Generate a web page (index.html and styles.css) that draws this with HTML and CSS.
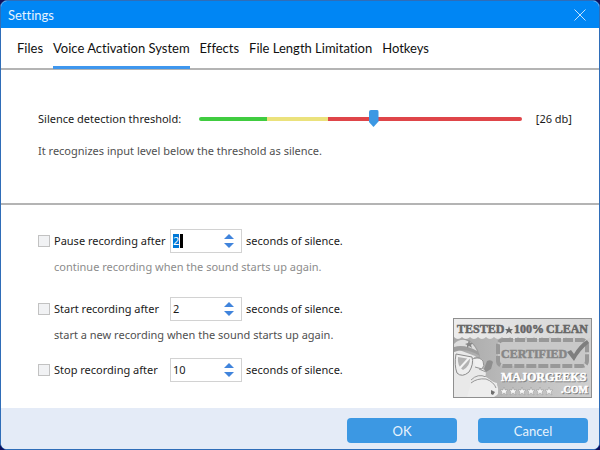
FILE: index.html
```html
<!DOCTYPE html>
<html lang="en">
  <head>
    <meta charset="UTF-8" />
    <meta name="viewport" content="width=device-width, initial-scale=1.0" />
    <title>Settings</title>
    <link rel="stylesheet" href="styles.css">
  </head>
  <body>
    <div class="window">
      <header class="titlebar">
        <h1 class="title">Settings</h1>
        <button class="close" type="button" aria-label="Close">
          <svg width="12" height="12" viewBox="0 0 12 12">
            <path d="M0.5 0.5 L11.5 11.5 M11.5 0.5 L0.5 11.5" />
          </svg>
        </button>
      </header>

      <nav class="tabs">
        <a class="tab" href="#files">Files</a>
        <a class="tab active" href="#voice">Voice Activation System</a>
        <a class="tab" href="#effects">Effects</a>
        <a class="tab" href="#length">File Length Limitation</a>
        <a class="tab" href="#hotkeys">Hotkeys</a>
      </nav>

      <section class="threshold">
        <div class="threshold-row">
          <label for="threshold">Silence detection threshold:</label>
          <input class="slider" type="range" id="threshold" min="0" max="48" value="26" />
          <output id="level" for="threshold">[26 db]</output>
        </div>
        <p class="note">It recognizes input level below the threshold as silence.</p>
      </section>

      <main class="options">
        <div class="option">
          <div class="option-row">
            <input class="check" type="checkbox" id="pause" />
            <label for="pause">Pause recording after</label>
            <span class="spin">
              <input class="number" type="number" id="pause-sec" value="2" aria-label="Pause seconds" />
              <span class="cursor"></span>
              <span class="arrows">
                <button class="up" type="button" aria-label="More"></button>
                <button class="down" type="button" aria-label="Less"></button>
              </span>
            </span>
            <span>seconds of silence.</span>
          </div>
          <p class="note indent muted">continue recording when the sound starts up again.</p>
        </div>

        <div class="option">
          <div class="option-row">
            <input class="check" type="checkbox" id="start" />
            <label for="start">Start recording after</label>
            <span class="spin">
              <input class="number" type="number" id="start-sec" value="2" aria-label="Start seconds" />
              <span class="arrows">
                <button class="up" type="button" aria-label="More"></button>
                <button class="down" type="button" aria-label="Less"></button>
              </span>
            </span>
            <span>seconds of silence.</span>
          </div>
          <p class="note indent">start a new recording when the sound starts up again.</p>
        </div>

        <div class="option last">
          <div class="option-row">
            <input class="check" type="checkbox" id="stop" />
            <label for="stop">Stop recording after</label>
            <span class="spin">
              <input class="number" type="number" id="stop-sec" value="10" aria-label="Stop seconds" />
              <span class="arrows">
                <button class="up" type="button" aria-label="More"></button>
                <button class="down" type="button" aria-label="Less"></button>
              </span>
            </span>
            <span>seconds of silence.</span>
          </div>
        </div>

        <svg class="badge" width="139" height="80" viewBox="0 0 139 80">
          <defs>
            <linearGradient id="top" x1="0" x2="1">
              <stop offset="0" stop-color="#ececec" />
              <stop offset="1" stop-color="#d4d4d4" />
            </linearGradient>
            <linearGradient id="back" x1="0" x2="1">
              <stop offset="0" stop-color="#a8a8a8" />
              <stop offset="0.45" stop-color="#bdbdbd" />
              <stop offset="1" stop-color="#d0d0d0" />
            </linearGradient>
          </defs>
          <rect x="0.5" y="0.5" width="138" height="79" fill="url(#top)" />
          <path fill="url(#back)" d="M1 19 q4 4 8 0 q4 4 8 0 q4 4 8 0 q4 4 8 0 q4 4 8 0 q4 4 8 0 q4 4 8 0 q4 4 8 0 q4 4 8 0 q4 4 8 0 q4 4 8 0 q4 4 8 0 q4 4 8 0 q4 4 8 0 q4 4 8 0 q4 4 8 0 q4 4 9 0 V79 H1 Z" />

          <!-- head -->
          <path fill="#e9e9e9" d="M1 30 L22 38 L28 44 L30 51 L33 54 L32 62 L44 65 L45 76 L40 79 H1 Z" />
          <path fill="#9d9d9d" d="M1 27 Q6 20 13 21 Q23 24 27 38 Q13 29 1 34 Z" />
          <path fill="#dedede" d="M1 26 Q6 21 12 22 Q20 24 24 33 Q12 26 1 29 Z" />
          <path fill="#888" d="M16 22 l1 3 3 0 -2 2 1 3 -3 -2 -2 2 0 -3 -2 -1 3 -1 Z" />
          <path fill="#eee" stroke="#8b8b8b" d="M3 36 L19 39 Q21 46 16 54 Q9 60 4 55 Q1 47 3 36 Z" />
          <path fill="#b2b2b2" d="M5 39 L17 41 Q17 48 10 52 Q4 48 5 39 Z" />
          <path fill="none" stroke="#f3f3f3" stroke-width="2" d="M7 50 L16 40" />
          <path fill="#f0f0f0" stroke="#929292" d="M21 40 Q27 39 30 43 Q32 48 29 51 L22 49" />
          <path fill="none" stroke="#9a9a9a" d="M19 41 L27 39 M26 51 L33 54 M18 62 Q25 55 33 59" />
          <path fill="#8e8e8e" d="M31 51 L34 43 Q38 41 40 44 L38 51 L33 54 Z" />
          <path fill="#ededed" d="M18 65 Q24 58 33 59 L42 65 Q47 70 44 77 L41 79 H14 Z" />
          <path fill="none" stroke="#959595" d="M18 65 Q24 60 33 61 Q41 64 43 70" />
          <path fill="#707070" d="M38 72 l4 2 -2 3 -2 -1 Z" />

          <!-- certified stamp -->
          <rect x="45" y="22" width="89" height="26" rx="5" fill="#c8c8c8" stroke="#989898" stroke-width="4" stroke-dasharray="10 2" />
          <text class="stamp certified" x="48" y="40">CERTIFIED</text>
          <path fill="#7e7e7e" d="M114 34 L118 32 L121 36 Q126 27 134 22 L136 25 Q127 32 121 43 Z" />

          <text class="stamp dark" x="4" y="15">TESTED</text>
          <path fill="#6a6a6a" d="M56 8 l1 3 3 0 -2 2 1 3 -3 -2 -3 2 1 -3 -2 -2 3 0 Z" />
          <text class="stamp dark" x="61" y="15">100%</text>
          <text class="stamp dark" x="93" y="15">CLEAN</text>

          <text class="stamp shade" x="49" y="64">MAJORGEEKS</text>
          <text class="stamp light" x="48" y="63">MAJORGEEKS</text>
          <g fill="#f6f6f6" stroke="#8c8c8c" stroke-width="0.4">
            <path id="star" d="M51 69 l1 3 3 0 -2 2 1 3 -3 -2 -3 2 1 -3 -2 -2 3 0 Z" />
            <use href="#star" x="9" />
            <use href="#star" x="18" />
            <use href="#star" x="27" />
            <use href="#star" x="36" />
            <use href="#star" x="45" />
          </g>
          <text class="stamp shade small" x="109" y="76">.COM</text>
          <text class="stamp light small" x="108" y="75">.COM</text>
          <rect x="0.5" y="0.5" width="138" height="79" fill="none" stroke="#8f8f8f" />
        </svg>
      </main>

      <footer class="footer">
        <button class="btn" type="button">OK</button>
        <button class="btn" type="button">Cancel</button>
      </footer>
    </div>

    <script>
      const slider = document.getElementById("threshold");
      slider.addEventListener("input", function () {
        document.getElementById("level").textContent = "[" + slider.value + " db]";
      });

      document.querySelectorAll(".spin").forEach((spin) => {
        const number = spin.querySelector(".number");
        spin.querySelector(".up").onclick = () => number.stepUp();
        spin.querySelector(".down").onclick = () => number.stepDown();
      });

      document.getElementById("pause-sec").select();
    </script>
  </body>
</html>
```
FILE: styles.css
```css
* {
  box-sizing: border-box;
}
body {
  margin: 0;
  background: #10105c;
  color: #1a1a1a;
  font-family: "Noto Sans", sans-serif;
  font-size: 11px;
  font-variant-ligatures: none;
  line-height: 16px;
}
button,
input {
  font: inherit;
  margin: 0;
  padding: 0;
  border: 0;
}
.window {
  display: flex;
  flex-direction: column;
  min-height: 100vh;
  border: 1px solid #2f6db8;
  border-radius: 7px;
  background: #fff;
  overflow: hidden;
}

/* title bar */
.titlebar {
  display: flex;
  align-items: center;
  justify-content: space-between;
  height: 27px;
  padding: 0 13px 0 7px;
  background: #0086f4;
}
.title {
  margin: 0;
  color: #e6f3fe;
  font-family: Lato, sans-serif;
  font-size: 13px;
  font-weight: normal;
}
.close {
  display: flex;
  background: none;
}
.close svg {
  fill: none;
  stroke: #c4e2fc;
}

/* tabs */
.tabs {
  display: flex;
  gap: 10px;
  height: 42px;
  padding: 0 16px;
  border-bottom: 2px solid #b4b4b4;
  font-family: Lato, sans-serif;
  font-size: 13px;
}
.tab {
  height: 41px;
  padding-top: 12px;
  color: #111;
  text-decoration: none;
}
.tab.active {
  border-bottom: 3px solid #3f97ee;
}

/* threshold */
.threshold {
  padding: 41px 27px 44px 37px;
  border-bottom: 2px solid #b4b4b4;
}
.threshold-row {
  display: flex;
  align-items: center;
}
.slider {
  flex: 1;
  height: 16px;
  margin: 0 14px 0 18px;
  background: none;
  appearance: none;
}
.slider::-webkit-slider-runnable-track {
  height: 4px;
  border-radius: 2px;
  background: linear-gradient(to right, #40cc40 0 21%, #ebe27c 21% 40%, #df4549 40%);
}
.slider::-webkit-slider-thumb {
  appearance: none;
  width: 10px;
  height: 17px;
  margin-top: -7px;
  border-radius: 2px;
  background: #3c98e3;
  clip-path: polygon(0 0, 100% 0, 100% 68%, 50% 100%, 0 68%);
}
.note {
  margin: 16px 0 0;
  color: #505050;
}

/* options */
.options {
  position: relative;
  flex: 1;
  padding: 24px 37px;
}
.option {
  margin-bottom: 22px;
}
.option:nth-child(2) {
  margin-bottom: 15px;
}
.option.last {
  margin-bottom: 0;
}
.option-row {
  display: grid;
  grid-template-columns: 12px 112px 72px auto;
  column-gap: 4px;
  align-items: center;
  white-space: nowrap;
}
.check {
  width: 12px;
  height: 12px;
  border: 1px solid #c2c2c2;
  background: #f1f2f4;
  appearance: none;
}
.check:checked {
  background: #3c98e3;
}
.spin {
  position: relative;
  display: flex;
  align-items: center;
  height: 24px;
  padding: 0 7px 0 2px;
  border: 1px solid #d2d2d2;
}
.number {
  flex: 1;
  min-width: 0;
  height: 14px;
  line-height: 14px;
  background: none;
  color: #1a1a1a;
  outline: none;
  appearance: textfield;
}
.number::-webkit-inner-spin-button {
  display: none;
}
.number::selection {
  background: #0078d7;
  color: #fff;
}
.cursor {
  position: absolute;
  left: 9px;
  top: 4px;
  width: 3px;
  height: 14px;
  background: #000;
}
.arrows {
  display: flex;
  flex-direction: column;
  gap: 4px;
}
.up,
.down {
  width: 10px;
  height: 5px;
  background: #4084dc;
}
.up {
  clip-path: polygon(50% 0, 100% 100%, 0 100%);
}
.down {
  clip-path: polygon(0 0, 100% 0, 50% 100%);
}
.indent {
  margin-top: 6px;
  padding-left: 16px;
}
.muted {
  color: #8c8c8c;
}

/* award badge */
.badge {
  position: absolute;
  right: 7px;
  bottom: 10px;
}
.stamp {
  font-family: "Liberation Serif", serif;
  font-size: 12px;
  font-weight: bold;
  stroke-width: 0.5px;
}
.dark {
  fill: #666;
  stroke: #666;
}
.certified {
  fill: #868686;
  stroke: #868686;
}
.light {
  fill: #fff;
  stroke: #fff;
}
.shade {
  fill: #808080;
  stroke: #808080;
}
.small {
  font-size: 10px;
}

/* footer */
.footer {
  display: flex;
  justify-content: flex-end;
  gap: 21px;
  padding: 10px 11px 6px;
  background: #e4ebf7;
}
.btn {
  width: 110px;
  height: 25px;
  border-radius: 4px;
  background: #3c98e3;
  color: #e8f3fc;
  font-family: Lato, sans-serif;
  font-size: 13px;
}
```
